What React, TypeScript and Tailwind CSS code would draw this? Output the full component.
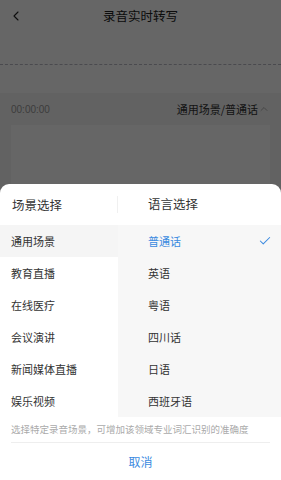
import { Check, ChevronLeft, ChevronUp } from "lucide-react";

const scenes = ["通用场景", "教育直播", "在线医疗", "会议演讲", "新闻媒体直播", "娱乐视频"];
const langs = ["普通话", "英语", "粤语", "四川话", "日语", "西班牙语"];

export default function App() {
  return (
    <div
      className="relative w-[281px] h-[480px] overflow-hidden bg-white"
      style={{ fontFamily: '"Noto Sans CJK SC", "Noto Sans", sans-serif' }}
    >
      {/* page behind the sheet */}
      <div className="flex flex-col h-full">
        <div className="relative flex items-center justify-center h-[32px]">
          <ChevronLeft className="absolute left-[8px] top-[8px] w-[16px] h-[16px] text-[#222]" strokeWidth={1.6} />
          <span className="text-[12.5px] text-[#222]">录音实时转写</span>
        </div>
        <div className="h-[32px]" />
        <div className="border-t border-dashed border-[#b8b8c4]" />
        <div className="h-[28px]" />
        <div className="flex items-center justify-between h-[32px] px-[11px] bg-[#f5f5f5]">
          <span className="text-[10px] text-[#999]" style={{ fontFamily: '"Liberation Sans", sans-serif' }}>
            00:00:00
          </span>
          <span className="flex items-center text-[11px] text-[#333]">
            通用场景/普通话
            <ChevronUp className="w-[12px] h-[12px] text-[#999]" strokeWidth={1.5} />
          </span>
        </div>
        <div className="flex-1 bg-[#f5f5f5] px-[11px]">
          <div className="h-full bg-white" />
        </div>
      </div>

      {/* dim overlay */}
      <div className="absolute inset-0 bg-black/60" />

      {/* bottom sheet */}
      <div className="absolute left-0 right-0 bottom-0 h-[296px] bg-white rounded-t-[9px] flex flex-col">
        <div className="flex items-center h-[41px]">
          <div className="w-[118px] pl-[12px] text-[12.5px] text-[#333] border-r border-[#f0f0f0] leading-[17px]">
            场景选择
          </div>
          <div className="pl-[30px] text-[12.5px] text-[#333]">语言选择</div>
        </div>
        <div className="flex">
          <div className="w-[118px] flex flex-col">
            {scenes.map((s, i) => (
              <div
                key={s}
                className={`h-[32px] flex items-center pl-[11px] text-[11px] text-[#333] ${i === 0 ? "bg-[#f5f5f5]" : ""}`}
              >
                {s}
              </div>
            ))}
          </div>
          <div className="flex-1 flex flex-col bg-[#f7f7f7]">
            {langs.map((l, i) => (
              <div key={l} className="h-[32px] flex items-center justify-between pl-[30px] pr-[9px]">
                <span className={`text-[11px] ${i === 0 ? "text-[#3b8ae0]" : "text-[#333]"}`}>{l}</span>
                {i === 0 && <Check className="w-[14px] h-[14px] text-[#3b8ae0]" strokeWidth={1.8} />}
              </div>
            ))}
          </div>
        </div>
        <div className="mx-[11px] h-[26px] flex items-center text-[9.5px] text-[#aaa] border-b border-[#eeeeee]">
          选择特定录音场景，可增加该领域专业词汇识别的准确度
        </div>
        <div className="flex-1 flex items-center justify-center text-[12px] text-[#3b8ae0]">取消</div>
      </div>
    </div>
  );
}
